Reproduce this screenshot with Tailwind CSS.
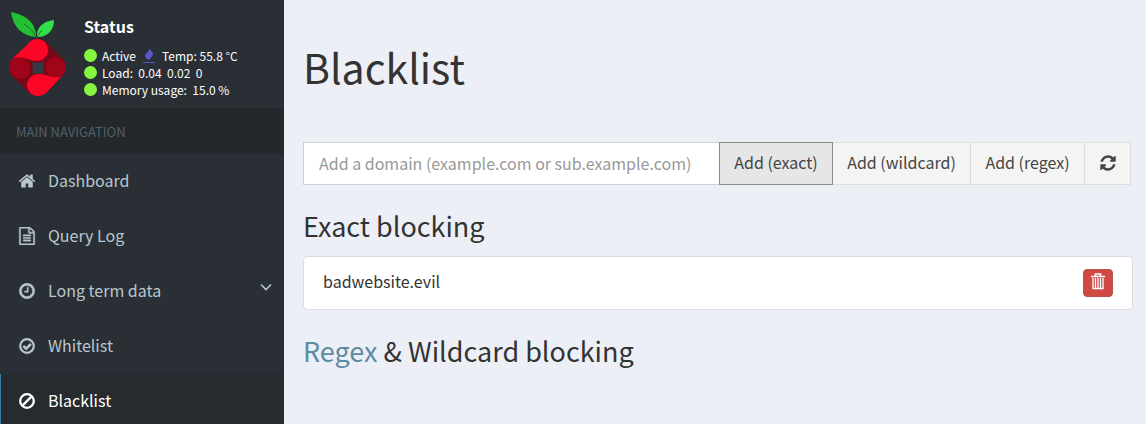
<!DOCTYPE html>
<html lang="en">

<head>
  <meta charset="UTF-8" />
  <title>Pi-hole - Blacklist</title>
  <meta name="viewport" content="width=device-width, initial-scale=1.0" />
  <script src="https://cdn.jsdelivr.net/npm/@tailwindcss/browser@4"></script>
</head>

<body class="flex min-h-screen bg-[#ecf0f6] font-['Noto_Sans_CJK_SC',sans-serif] text-base text-[#333]">
  <!-- Sidebar -->
  <aside class="w-[284px] shrink-0 bg-[#292f35]">
    <div class="flex h-[108px] text-white">
      <svg class="ml-2 mt-2.5 h-[90px] w-[60px] shrink-0" viewBox="0 0 60 90" aria-hidden="true">
        <path fill="#22c133" d="M3 2C14 4 25 10 27 20c1 3 1 5 1 7C14 26 5 17 3 2Z" />
        <path fill="#33e04a" d="M29 27c-1-9 6-16 17-17 0 10-6 17-17 17Z" />
        <path stroke="#1c6a24" stroke-width="1" fill="none" d="M16 14c6 4 10 8 12 14l6-8" />
        <path fill="#780717" d="M29 29c8 0 10 4 14 8l11 11c5 5 5 13 0 18L39 82c-5 5-14 5-19 0L5 67c-5-6-5-13 0-19l13-12c4-4 5-7 11-7Z" />
        <path fill="#a00419" d="M38 58c-1-7 4-11 10-11 6 1 10 5 10 10 0 4-2 7-5 10-8 2-14 1-15-9Z" />
        <path fill="#a00419" d="M22 58c1 7-4 11-10 11-6-1-11-6-11-11 0-4 1-7 4-10 9-2 16 1 17 10Z" />
        <path fill="#fb0626" d="M29 29c7 0 11 5 11 11s-5 11-11 11c-9 0-12-5-24-3l13-12c3-4 6-7 11-7Z" />
        <path fill="#fb0626" d="M30 64c9 0 12 4 23 3L39 82c-2 2-6 4-9 4-6 0-11-5-11-11s5-11 11-11Z" />
        <path fill="#343a42" d="M24 52c4 1 8 1 12 0-1 4-1 8 0 12-4-1-8-1-12 0 1-4 1-8 0-12Z" />
      </svg>
      <div class="ml-4 pt-4">
        <p class="mb-[11px] text-base leading-5 font-bold">Status</p>
        <ul class="text-xs leading-[17px]">
          <li class="flex items-center gap-[5px]">
            <span class="size-[13px] rounded-full bg-[#84f541]"></span>
            <span>Active</span>
            <svg class="mx-0.5 h-3.5 w-3" viewBox="0 0 12 14" fill="#5a57cc" aria-hidden="true">
              <path d="M7 0c1 2 3 3 3 5 0 2-2 3-4 6C4 10 2 9 2 7c0-2 3-4 5-7ZM0 13h12v1H0Z" />
            </svg>
            <span>Temp: 55.8 °C</span>
          </li>
          <li class="flex items-center gap-[5px]">
            <span class="size-[13px] rounded-full bg-[#84f541]"></span>
            <span>Load:&nbsp; 0.04&nbsp; 0.02&nbsp; 0</span>
          </li>
          <li class="flex items-center gap-[5px]">
            <span class="size-[13px] rounded-full bg-[#84f541]"></span>
            <span>Memory usage:&nbsp; 15.0 %</span>
          </li>
        </ul>
      </div>
    </div>

    <h2 class="h-[46px] bg-[#22282b] pl-4 text-[13px] leading-[48px] text-[#52616a]">MAIN NAVIGATION</h2>

    <nav class="text-[#b8c7ce]">
      <a href="#" class="flex h-[55px] items-center gap-3 pb-0.5 pl-[18px] hover:text-white">
        <svg class="size-[18px]" viewBox="0 0 1792 1792" fill="currentColor" aria-hidden="true">
          <path d="M1472 992v480q0 26-19 45t-45 19h-384v-384h-256v384h-384q-26 0-45-19t-19-45v-480q0-1 .5-3t.5-3l575-474 575 474q1 2 1 6zm223-69l-62 74q-8 9-21 11h-3q-13 0-21-7l-692-577-692 577q-12 8-24 7-13-2-21-11l-62-74q-8-10-7-23.5t11-21.5l719-599q32-26 76-26t76 26l244 204v-195q0-14 9-23t23-9h192q14 0 23 9t9 23v408l219 182q10 8 11 21.5t-7 23.5z" />
        </svg>
        <span class="pb-0.5">Dashboard</span>
      </a>
      <a href="#" class="flex h-[55px] items-center gap-3 pb-0.5 pl-[18px] hover:text-white">
        <svg class="size-[18px]" viewBox="0 0 1792 1792" fill="currentColor" stroke="currentColor" stroke-width="40" aria-hidden="true">
          <path d="M1596 380q28 28 48 76t20 88v1152q0 40-28 68t-68 28h-1344q-40 0-68-28t-28-68v-1600q0-40 28-68t68-28h896q40 0 88 20t76 48zm-444-244v376h376q-10-29-22-41l-313-313q-12-12-41-22zm384 1528v-1024h-416q-40 0-68-28t-28-68v-416h-768v1536h1280zm-1024-864q0-14 9-23t23-9h704q14 0 23 9t9 23v64q0 14-9 23t-23 9h-704q-14 0-23-9t-9-23v-64zm736 224q14 0 23 9t9 23v64q0 14-9 23t-23 9h-704q-14 0-23-9t-9-23v-64q0-14 9-23t23-9h704zm0 256q14 0 23 9t9 23v64q0 14-9 23t-23 9h-704q-14 0-23-9t-9-23v-64q0-14 9-23t23-9h704z" />
        </svg>
        <span class="pb-0.5">Query Log</span>
      </a>
      <a href="#" class="flex h-[55px] items-center gap-3 pr-3 pb-0.5 pl-[18px] hover:text-white">
        <svg class="size-[18px]" viewBox="0 0 1792 1792" fill="currentColor" stroke="currentColor" stroke-width="40" aria-hidden="true">
          <path d="M1024 544v448q0 14-9 23t-23 9h-320q-14 0-23-9t-9-23v-64q0-14 9-23t23-9h224v-352q0-14 9-23t23-9h64q14 0 23 9t9 23zm416 352q0-148-73-273t-198-198-273-73-273 73-198 198-73 273 73 273 198 198 273 73 273-73 198-198 73-273zm224 0q0 209-103 385.5t-279.5 279.5-385.5 103-385.5-103-279.5-279.5-103-385.5 103-385.5 279.5-279.5 385.5-103 385.5 103 279.5 279.5 103 385.5z" />
        </svg>
        <span class="pb-0.5">Long term data</span>
        <svg class="mb-2 ml-auto h-2 w-3" viewBox="0 0 12 8" fill="none" stroke="currentColor" stroke-width="1.6" aria-hidden="true">
          <path d="m1 1.5 5 5 5-5" />
        </svg>
      </a>
      <a href="#" class="flex h-[55px] items-center gap-3 pb-0.5 pl-[18px] hover:text-white">
        <svg class="size-[18px]" viewBox="0 0 18 18" fill="none" stroke="currentColor" aria-hidden="true">
          <circle cx="9" cy="9" r="6.8" stroke-width="2.2" />
          <path d="m5.3 8.8 2.9 2.9 4.7-4.700" stroke-width="2.5" />
        </svg>
        <span class="pb-0.5">Whitelist</span>
      </a>
      <a href="#" class="flex h-[55px] items-center gap-3 border-l border-[#3c7ca5] bg-[#252b2e] pb-0.5 pl-[17px] text-white">
        <svg class="size-[18px]" viewBox="0 0 18 18" fill="none" stroke="currentColor" stroke-width="2.3" aria-hidden="true">
          <circle cx="9" cy="9" r="6.8" />
          <path d="m4.4 13.6 9.2-9.2" />
        </svg>
        <span class="pb-0.5">Blacklist</span>
      </a>
    </nav>
  </aside>

  <!-- Content -->
  <main class="min-w-0 flex-1 pr-[13px] pl-[19px]">
    <h1 class="pt-[38px] text-[41px] leading-[56px]">Blacklist</h1>

    <form class="mt-12 mr-0.5 flex h-[43px]">
      <input id="domain" type="text" aria-label="Domain" placeholder="Add a domain (example.com or sub.example.com)" class="min-w-0 flex-1 border border-r-0 border-[#ccd0d6] bg-white px-[15px] pb-0.5 outline-none placeholder:text-[#999]" />
      <button type="button" class="w-[114px] border border-[#8c8c8c] bg-[#e6e6e6] pb-1 text-[#444]">Add (exact)</button>
      <button type="button" class="w-[138px] border border-l-0 border-[#ddd] bg-[#f4f4f4] pb-1 text-[#444]">Add (wildcard)</button>
      <button type="button" class="w-[114px] border border-l-0 border-[#ddd] bg-[#f4f4f4] pb-1 text-[#444]">Add (regex)</button>
      <button type="button" aria-label="Refresh" class="flex w-[46px] items-center justify-center border border-l-0 border-[#ddd] bg-[#f4f4f4] pb-0.5 text-[#444]">
        <svg class="size-[18px]" viewBox="0 0 1792 1792" fill="currentColor" aria-hidden="true">
          <path d="M1639 1056q0 5-1 7-64 268-268 434.5t-478 166.5q-146 0-282.5-55t-243.5-157l-129 129q-19 19-45 19t-45-19-19-45v-448q0-26 19-45t45-19h448q26 0 45 19t19 45-19 45l-137 137q71 66 161 102t187 36q134 0 250-65t186-179q11-17 53-117 8-23 30-23h192q13 0 22.5 9.5t9.5 22.5zm25-800v448q0 26-19 45t-45 19h-448q-26 0-45-19t-19-45 19-45l138-138q-148-137-349-137-134 0-250 65t-186 179q-11 17-53 117-8 23-30 23h-199q-13 0-22.5-9.5t-9.5-22.5v-7q65-268 270-434.5t480-166.5q146 0 284 55.5t245 156.5l130-129q19-19 45-19t45 19 19 45z" />
        </svg>
      </button>
    </form>

    <h3 class="mt-[23px] text-[27px] leading-9">Exact blocking</h3>
    <ul class="mt-3 rounded border border-[#dadde2] bg-white">
      <li class="flex h-[52px] items-center justify-between px-[19px]">
        <span class="pb-1">badwebsite.evil</span>
        <button type="button" aria-label="Delete badwebsite.evil" class="flex h-7 w-[30px] items-center justify-center rounded border border-[#b8504d] bg-[#cf4a43] text-white">
          <svg class="mb-1 h-[17px] w-3.5" viewBox="0 0 14 17" fill="none" stroke="currentColor" aria-hidden="true">
            <path d="M0 3.5h14M4.500 3V1h5v2" stroke-width="1.6" />
            <path d="M2 5v10.500h10V5M4.500 5v10M7 5v10M9.500 5v10" stroke-width="1.3" />
          </svg>
        </button>
      </li>
    </ul>
    <h3 class="mt-[23px] text-[27px] leading-9"><a href="#" class="text-[#5b8ca3]">Regex</a> &amp; Wildcard blocking</h3>
  </main>
</body>

</html>
